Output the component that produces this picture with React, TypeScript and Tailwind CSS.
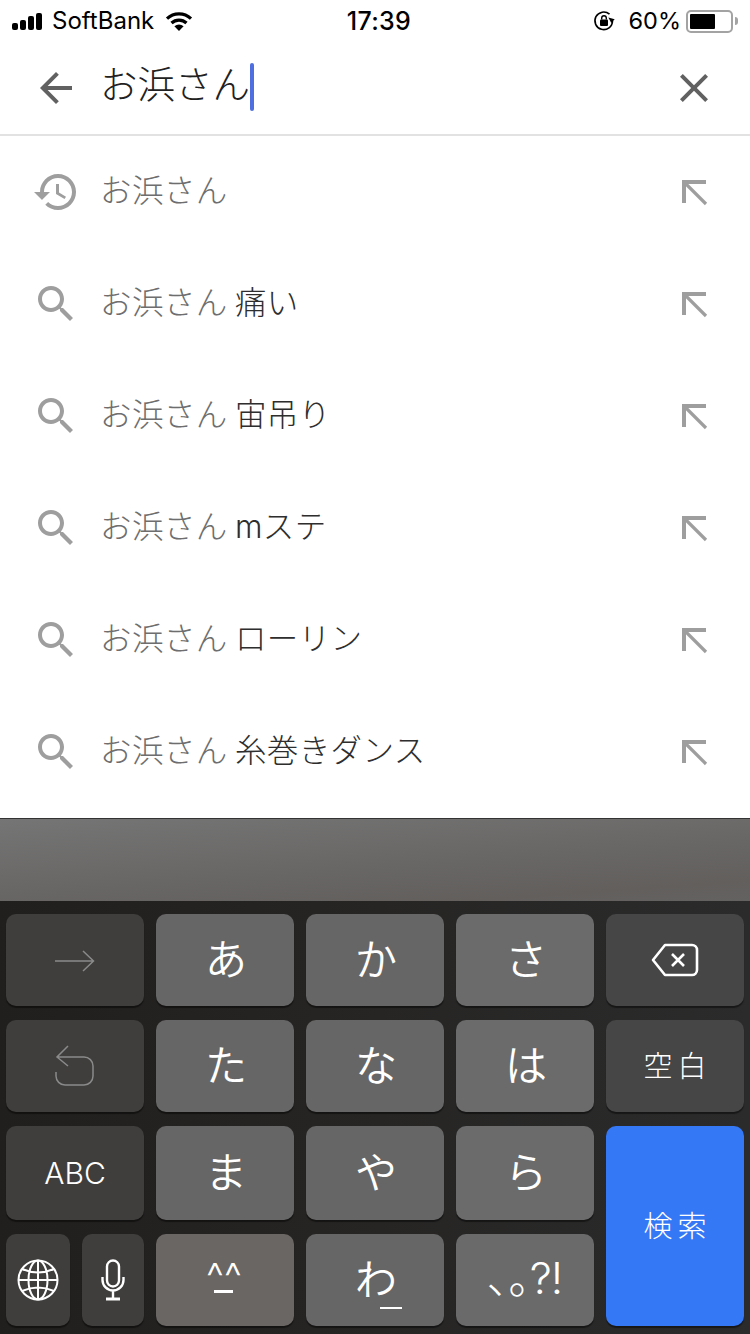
import React from "react";

const CJK = "font-['Inter','Noto_Sans_CJK_JP',sans-serif]";

const suggestions = ["", "痛い", "宙吊り", "mステ", "ローリン", "糸巻きダンス"];

const SearchIcon = () => (
  <svg viewBox="0 0 24 24" className="w-12 h-12 fill-[#9e9e9e]">
    <path d="M15.5 14h-.79l-.28-.27C15.41 12.59 16 11.11 16 9.5 16 5.91 13.09 3 9.5 3S3 5.91 3 9.5 5.91 16 9.5 16c1.61 0 3.09-.59 4.23-1.57l.27.28v.79l5 4.99L20.49 19l-4.99-5zm-6 0C7.01 14 5 11.99 5 9.5S7.01 5 9.5 5 14 7.01 14 9.5 11.99 14 9.5 14z" />
  </svg>
);

const HistoryIcon = () => (
  <svg viewBox="0 0 24 24" className="w-12 h-12 fill-[#9e9e9e]">
    <path d="M13 3c-4.97 0-9 4.03-9 9H1l3.89 3.89.07.14L9 12H6c0-3.87 3.13-7 7-7s7 3.13 7 7-3.13 7-7 7c-1.93 0-3.68-.79-4.94-2.06l-1.42 1.42C8.27 19.99 10.51 21 13 21c4.97 0 9-4.03 9-9s-4.03-9-9-9zm-1 5v5l4.28 2.54.72-1.21-3.5-2.08V8H12z" />
  </svg>
);

const FillIcon = () => (
  <svg viewBox="0 0 26 26" className="w-[26px] h-[26px] mt-[2px] mr-[42px]" fill="none" stroke="#9e9e9e">
    <path d="M2 23 V2 H24" strokeWidth="4" />
    <path d="M3 3 L24 24" strokeWidth="3.2" />
  </svg>
);

const StatusBar = () => (
  <div className="h-10 pt-[2px] grid grid-cols-3 items-center text-black font-['Inter','Liberation_Sans',sans-serif]">
    <div className="flex items-center pl-3">
      <div className="flex items-end gap-[2px] h-[17px]">
        <div className="w-[6px] h-[7px] bg-black rounded-[2px]" />
        <div className="w-[6px] h-[10px] bg-black rounded-[2px]" />
        <div className="w-[6px] h-[14px] bg-black rounded-[2px]" />
        <div className="w-[6px] h-[17px] bg-black rounded-[2px]" />
      </div>
      <span className="ml-[10px] text-[24px] leading-none">SoftBank</span>
      <svg viewBox="0 0 30 22" className="ml-[10px] w-[30px] h-[22px]">
        <path d="M15 21 L10.4 16.2 A7 7 0 0 1 19.6 16.2 Z" fill="#000" />
        <path d="M7.5 13 A11 11 0 0 1 22.5 13" fill="none" stroke="#000" strokeWidth="3.2" />
        <path d="M3 8.6 A17.5 17.5 0 0 1 27 8.6" fill="none" stroke="#000" strokeWidth="3.2" />
      </svg>
    </div>
    <div className="pl-2 text-center text-[25px] font-medium leading-none tracking-[0.3px]">17:39</div>
    <div className="flex items-center justify-end pr-3">
      <svg viewBox="0 0 22 22" className="w-[22px] h-[22px]">
        <path d="M19.5 11 A8.8 8.8 0 1 1 16.5 4.2" fill="none" stroke="#000" strokeWidth="1.6" />
        <path d="M15 8 L21.5 8.5 L18.8 13 Z" fill="#000" transform="rotate(10 18 10)" />
        <rect x="7" y="9.5" width="8" height="6.5" rx="1" fill="#000" />
        <path d="M8.7 9.5 V8 A2.3 2.3 0 0 1 13.3 8 V9.5" fill="none" stroke="#000" strokeWidth="1.4" />
      </svg>
      <span className="ml-[14px] text-[23.5px] leading-none">60%</span>
      <div className="ml-[5px] w-[47px] h-[23px] rounded-[5px] border-2 border-[#a3a3a3] p-[2px]">
        <div className="w-[25px] h-full bg-black rounded-[1px]" />
      </div>
      <div className="ml-[2px] w-[3px] h-[8px] bg-[#a3a3a3] rounded-r-full" />
    </div>
  </div>
);

const Key = ({
  children,
  dark,
  className = "",
}: {
  children?: React.ReactNode;
  dark?: boolean;
  className?: string;
}) => (
  <div
    className={`flex items-center justify-center rounded-[10px] text-white shadow-[0_2px_1px_rgba(0,0,0,0.45)] ${
      dark ? "bg-[#3f3e3d]" : "bg-[#676666]"
    } ${className}`}
  >
    {children}
  </div>
);

const kana = "text-[42px] font-[350] pl-[2px] leading-none";
const label = "text-[29px] font-light tracking-[5px] pl-[5px] leading-none";

export default function App() {
  return (
    <div className={`w-[750px] h-[1334px] flex flex-col bg-white overflow-hidden ${CJK}`}>
      <StatusBar />

      <div className="h-[94px] flex items-center border-b-2 border-[#e2e2e2] box-content -mb-[2px]">
        <svg viewBox="0 0 24 24" className="w-12 h-12 ml-8 fill-[#616161] mt-[2px]">
          <path d="M20 11H7.83l5.59-5.59L12 4l-8 8 8 8 1.41-1.41L7.83 13H20v-2z" />
        </svg>
        <div className="ml-5 flex items-center flex-1">
          <span className="text-[37.5px] leading-none text-[#212121] font-light mb-1">お浜さん</span>
          <div className="w-[4px] h-[48px] rounded-full bg-[#4f6fe0]" />
        </div>
        <svg viewBox="0 0 24 24" className="w-12 h-12 mr-8 fill-[#616161] mt-[2px]">
          <path d="M19 6.41L17.59 5 12 10.59 6.41 5 5 6.41 10.59 12 5 17.59 6.41 19 12 13.41 17.59 19 19 17.59 13.41 12z" />
        </svg>
      </div>

      <div className="mt-[2px] h-[682px] flex flex-col">
        {suggestions.map((s, i) => (
          <div key={i} className="h-[112px] flex items-center shrink-0">
            <div className="ml-8 w-12 h-12">{i === 0 ? <HistoryIcon /> : <SearchIcon />}</div>
            <div className="ml-5 mb-[2px] flex-1 text-[31.5px] leading-none font-light text-[#6e6e6e] tracking-[0.4px] [word-spacing:-2px] whitespace-pre">
              お浜さん{s && <span className="text-[#2e2e2e]"> {s}</span>}
            </div>
            <FillIcon />
          </div>
        ))}
      </div>

      <div className="h-[83px] border-t border-[#333] bg-[linear-gradient(176deg,#757575,#625f5d_85%,#646261)]" />

      <div className="flex-1 bg-gradient-to-r from-[#211f1d] to-[#2b2b2b] px-[6px] pt-[13px] grid grid-cols-[repeat(5,138px)] grid-rows-[92px_92px_94px_92px] gap-x-3 gap-y-[14px]">
        <Key dark>
          <svg viewBox="0 0 40 22" className="w-10 h-[22px] mt-[2px]">
            <path d="M0 11 H38 M28 1 L38.5 11 L28 21" fill="none" stroke="#8a8a8a" strokeWidth="1.5" />
          </svg>
        </Key>
        <Key className={kana}>あ</Key>
        <Key className={kana}>か</Key>
        <Key className={`${kana} !bg-[#6b6b6b]`}>さ</Key>
        <Key dark className="!bg-[#464646]">
          <svg viewBox="0 0 48 34" className="w-12 h-[34px]">
            <path
              d="M14 2 H41 A5 5 0 0 1 46 7 V27 A5 5 0 0 1 41 32 H14 L2 17 Z"
              fill="none"
              stroke="#fff"
              strokeWidth="2.6"
              strokeLinejoin="round"
            />
            <path d="M21 11 L33 23 M33 11 L21 23" stroke="#fff" strokeWidth="2.6" />
          </svg>
        </Key>

        <Key dark>
          <svg viewBox="0 0 40 42" className="w-10 h-[42px]">
            <path
              d="M13 1 L2 12 L13 21 M2 12 H29 A9 9 0 0 1 38 21 V31 A9 9 0 0 1 29 40 H10 A9 9 0 0 1 1 31 V27"
              fill="none"
              stroke="#8a8a8a"
              strokeWidth="1.5"
            />
          </svg>
        </Key>
        <Key className={kana}>た</Key>
        <Key className={kana}>な</Key>
        <Key className={`${kana} !bg-[#6b6b6b]`}>は</Key>
        <Key dark className={`${label} !bg-[#464646]`}>
          空白
        </Key>

        <Key dark className="text-[30px] font-light leading-none">
          ABC
        </Key>
        <Key className={kana}>ま</Key>
        <Key className={kana}>や</Key>
        <Key className={`${kana} !bg-[#6b6b6b]`}>ら</Key>
        <Key className={`${label} row-span-2 !bg-[#3478f6]`}>検索</Key>

        <div className="flex justify-between">
          <Key dark className="w-16">
            <svg viewBox="0 0 42 42" className="w-[42px] h-[42px]" fill="none" stroke="#fff" strokeWidth="2">
              <circle cx="21" cy="21" r="19.5" />
              <ellipse cx="21" cy="21" rx="9.5" ry="19.5" />
              <path d="M21 1.5 V40.5 M1.5 21 H40.5 M5 10 Q21 17 37 10 M5 32 Q21 25 37 32" />
            </svg>
          </Key>
          <Key dark className="w-[62px]">
            <svg viewBox="0 0 24 42" className="w-6 h-[42px]" fill="none" stroke="#fff" strokeWidth="2.4">
              <rect x="6" y="1.5" width="12" height="26" rx="6" />
              <path d="M1.5 18 V21 A10.5 10.5 0 0 0 22.5 21 V18 M12 32 V39" />
              <path d="M5 40 H19" strokeWidth="3" />
            </svg>
          </Key>
        </div>
        <Key className="relative text-[40px] font-light leading-none pr-[2px] !bg-[#6a6664]">
          <span className="-mt-[6px]">^^</span>
          <div className="absolute left-[58px] top-[56px] w-[19px] h-[3px] bg-white" />
        </Key>
        <Key className="relative">
          <span className={kana}>わ</span>
          <div className="absolute left-[74px] top-[73px] w-[22px] h-[2px] bg-white" />
        </Key>
        <Key className="text-[44px] font-light leading-none !bg-[#6a6a6a]">
          <span className="tracking-[-1px] -mt-1">､｡?!</span>
        </Key>
      </div>
    </div>
  );
}
